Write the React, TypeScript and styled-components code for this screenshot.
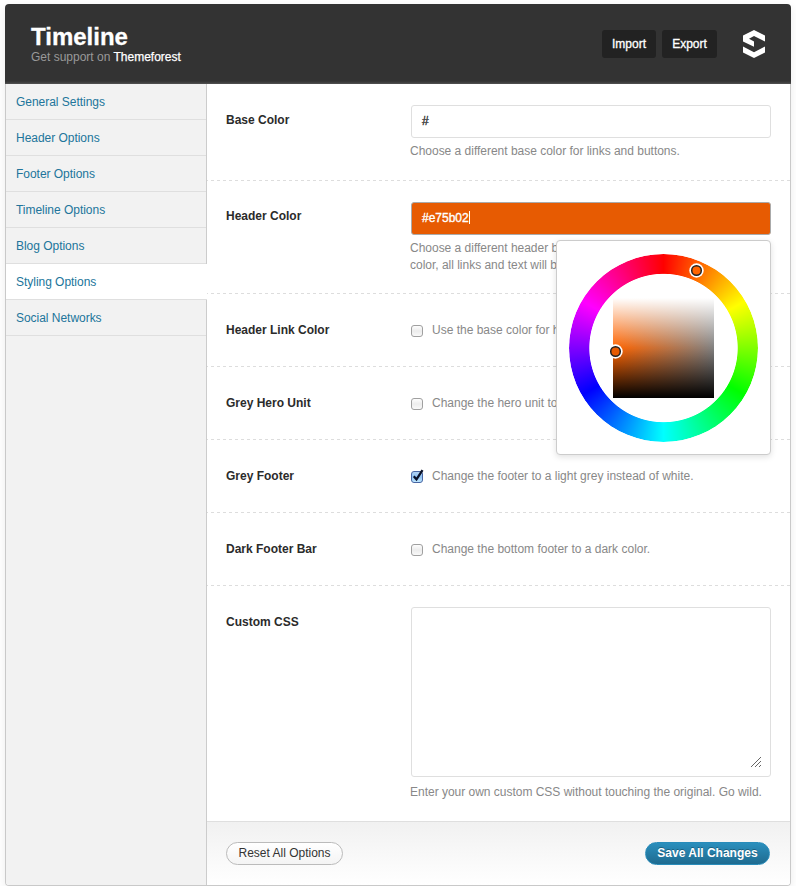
import React from "react";
import styled, { createGlobalStyle, css } from "styled-components";

const Global = createGlobalStyle`
  * { box-sizing: border-box; }
  body { margin: 0; background: #fff; font-family: "Liberation Sans", Arial, sans-serif; font-size: 12px; color: #2b2b2b; }
  h1, p, nav { margin: 0; }
`;

const Frame = styled.div`
  width: 786px;
  height: 882px;
  margin: 4px 0 0 5px;
  display: flex;
  flex-direction: column;
  border-radius: 4px;
  box-shadow: 0 3px 10px rgba(0, 0, 0, 0.08);
`;

const Header = styled.header`
  height: 80px;
  flex: none;
  display: flex;
  align-items: center;
  padding: 0 25px 0 26px;
  background: linear-gradient(#333 0, #333 77px, #444 79px, #555 80px);
  border-radius: 4px 4px 0 0;
`;

const Brand = styled.div`
  flex: 1;
  padding-top: 2px;
`;

const Title = styled.h1`
  font-size: 24px;
  line-height: 25px;
  color: #fff;
  -webkit-text-stroke: 0.3px #fff;
`;

const Support = styled.p`
  font-size: 12px;
  line-height: 17px;
  color: #999;
`;

const SupportLink = styled.a`
  color: #fff;
  -webkit-text-stroke: 0.25px #fff;
`;

const HeaderButton = styled.button<{ $w: number }>`
  width: ${(p) => p.$w}px;
  height: 28px;
  margin-right: 6px;
  padding: 0;
  border: 0;
  border-radius: 3px;
  background: #222;
  color: #fff;
  font: 12px "Liberation Sans", Arial, sans-serif;
  -webkit-text-stroke: 0.3px #fff;
`;

const Logo = styled.svg`
  width: 24px;
  height: 28px;
  margin-left: 19px;
`;

const Body = styled.div`
  flex: 1;
  display: flex;
  border: 1px solid #c9c9c9;
  border-top: 0;
  border-radius: 0 0 4px 4px;
  background: #fff;
`;

const Sidebar = styled.nav`
  width: 201px;
  background: #f2f2f2;
  box-shadow: inset -1px 0 #ccc;
  border-radius: 0 0 0 3px;
`;

const NavItem = styled.a<{ $active?: boolean }>`
  display: block;
  height: 36px;
  padding-left: 10px;
  margin-right: 1px;
  line-height: 36px;
  letter-spacing: -0.03px;
  border-bottom: 1px solid #dfdfdf;
  color: #21759b;
  ${(p) =>
    p.$active &&
    css`
      margin-right: 0;
      background: #fff;
    `}
`;

const Main = styled.main`
  flex: 1;
  display: flex;
  flex-direction: column;
`;

const Row = styled.section<{ $h: number; $last?: boolean }>`
  height: ${(p) => p.$h}px;
  display: flex;
  padding: 21px 19px 0;
  background: ${(p) =>
    p.$last
      ? "none"
      : "repeating-linear-gradient(90deg, #ddd 0 3px, transparent 3px 6px) -2px 100% / calc(100% + 2px) 1px no-repeat"};
`;

const Label = styled.div<{ $raised?: boolean }>`
  width: 184px;
  flex: none;
  padding-top: ${(p) => (p.$raised ? 6 : 7)}px;
  line-height: 16px;
  font-weight: bold;
`;

const Field = styled.div`
  position: relative;
  flex: 1;
`;

const ColorInput = styled.div<{ $filled?: boolean }>`
  height: 33px;
  margin-left: 1px;
  display: flex;
  align-items: center;
  padding: 0 10px 2px;
  border: 1px solid ${(p) => (p.$filled ? "#aaa" : "#dfdfdf")};
  border-radius: 3px;
  background: ${(p) => (p.$filled ? "#e75b02" : "#fff")};
  color: ${(p) => (p.$filled ? "#fff" : "#333")};
  -webkit-text-stroke: 0.35px currentColor;
`;

const Caret = styled.span`
  width: 1px;
  height: 13px;
  background: #fff;
`;

const Help = styled.p<{ $gap?: number }>`
  padding-top: ${(p) => p.$gap ?? 5}px;
  line-height: 17px;
  letter-spacing: -0.015px;
  color: #888;
  white-space: nowrap;
`;

const CheckLine = styled.label`
  display: flex;
  padding-top: 7px;
  color: #888;
  line-height: 16px;
  white-space: nowrap;
`;

const CheckIcon = styled.svg`
  width: 14px;
  height: 15px;
  margin: 1px 8px 0 0;
`;

const TextArea = styled.div`
  height: 170px;
  margin-left: 1px;
  display: flex;
  align-items: flex-end;
  justify-content: flex-end;
  padding: 8px;
  border: 1px solid #dfdfdf;
  border-radius: 3px;
`;

const Picker = styled.div`
  position: absolute;
  z-index: 2;
  top: 38px;
  right: 0;
  width: 215px;
  height: 215px;
  border: 1px solid #ccc;
  border-radius: 4px;
  background: #fff;
  box-shadow: 0 2px 6px rgba(0, 0, 0, 0.12);
`;

const Wheel = styled.div`
  position: absolute;
  left: 12px;
  top: 13px;
  width: 189px;
  height: 188px;
  border-radius: 50%;
  background: conic-gradient(#f00, #ff0, #0f0, #0ff, #00f, #f0f, #f00);
  mask: radial-gradient(circle, transparent 73.8px, #000 74.6px);
`;

const Shade = styled.div`
  position: absolute;
  left: 56px;
  top: 57px;
  width: 101px;
  height: 100px;
  background: linear-gradient(#fff, rgba(255, 255, 255, 0) 50%, rgba(0, 0, 0, 0) 50%, #000),
    linear-gradient(90deg, #ff6400, #808080);
`;

const Marker = styled.svg<{ $x: number; $y: number }>`
  position: absolute;
  left: ${(p) => p.$x}px;
  top: ${(p) => p.$y}px;
  width: 15px;
  height: 15px;
`;

const Footer = styled.footer`
  height: 64px;
  display: flex;
  align-items: center;
  justify-content: space-between;
  padding: 0 20px 1px 19px;
  border-top: 1px solid #dfdfdf;
  border-radius: 0 0 3px 0;
  background: linear-gradient(#f1f1f1, #fff);
`;

const PillButton = styled.button<{ $primary?: boolean }>`
  width: ${(p) => (p.$primary ? 125 : 117)}px;
  height: 23px;
  padding: 0 0 1px;
  border: 1px solid ${(p) => (p.$primary ? "#298cba" : "#bbb")};
  border-radius: 12px;
  font: ${(p) => (p.$primary ? "bold" : "normal")} 12px "Liberation Sans", Arial, sans-serif;
  color: ${(p) => (p.$primary ? "#fff" : "#333")};
  text-shadow: ${(p) => (p.$primary ? "0 -1px 0 rgba(0,0,0,.3)" : "none")};
  background: ${(p) => (p.$primary ? "linear-gradient(#2a8fbd, #1f6b90)" : "linear-gradient(#fff, #f4f4f4)")};
`;

const navItems = [
  "General Settings",
  "Header Options",
  "Footer Options",
  "Timeline Options",
  "Blog Options",
  "Styling Options",
  "Social Networks",
];

const toggles = [
  { label: "Header Link Color", text: "Use the base color for header links.", on: false },
  { label: "Grey Hero Unit", text: "Change the hero unit to a light grey.", on: false },
  { label: "Grey Footer", text: "Change the footer to a light grey instead of white.", on: true },
  { label: "Dark Footer Bar", text: "Change the bottom footer to a dark color.", on: false },
];

function Checkbox({ on }: { on: boolean }) {
  const fill = on ? "boxOn" : "boxOff";
  return (
    <CheckIcon viewBox="0 0 14 15">
      <defs>
        <linearGradient id={fill} x2="0" y2="1">
          <stop offset="0" stopColor={on ? "#b5d5f5" : "#fff"} />
          <stop offset=".5" stopColor={on ? "#8fc2f3" : "#ececec"} />
          <stop offset="1" stopColor={on ? "#c4eaff" : "#fafafa"} />
        </linearGradient>
      </defs>
      <rect x="1.5" y="2.5" width="11" height="11" rx="2.5" fill={`url(#${fill})`} stroke={on ? "#4866a3" : "#a0a0a0"} />
      {on && <path d="M3.8 7.2 6.5 10.400 12.500 1.200" fill="none" stroke="#0a1128" strokeWidth="2.300" />}
    </CheckIcon>
  );
}

function ColorMarker({ x, y, color }: { x: number; y: number; color: string }) {
  return (
    <Marker $x={x} $y={y} viewBox="0 0 15 15">
      <circle cx="7.5" cy="7.5" r="7.2" fill="#fff" />
      <circle cx="7.5" cy="7.5" r="4.8" fill={color} stroke="#222" strokeWidth="1.500" />
    </Marker>
  );
}

export default function App() {
  return (
    <>
      <Global />
      <Frame>
        <Header>
          <Brand>
            <Title>Timeline</Title>
            <Support>
              Get support on <SupportLink>Themeforest</SupportLink>
            </Support>
          </Brand>
          <HeaderButton $w={54}>Import</HeaderButton>
          <HeaderButton $w={55}>Export</HeaderButton>
          <Logo viewBox="0 0 24 28" fill="#fff">
            <path d="M1 5.500 12 0 23 5.500V11.600L12 6 7 8.800 12 11.600V16.800L1 11.600Z" />
            <path d="M1 16.500 12 22.300 23 16.500V22.500L12 28 1 22.500Z" />
          </Logo>
        </Header>
        <Body>
          <Sidebar>
            {navItems.map((n) => (
              <NavItem key={n} $active={n === "Styling Options"}>
                {n}
              </NavItem>
            ))}
          </Sidebar>
          <Main>
            <Row $h={97}>
              <Label>Base Color</Label>
              <Field>
                <ColorInput>#</ColorInput>
                <Help>Choose a different base color for links and buttons.</Help>
              </Field>
            </Row>
            <Row $h={113}>
              <Label $raised>Header Color</Label>
              <Field>
                <ColorInput $filled>
                  #e75b02
                  <Caret />
                </ColorInput>
                <Help>
                  Choose a different header background
                  <br />
                  color, all links and text will be white.
                </Help>
                <Picker>
                  <Wheel />
                  <Shade />
                  <ColorMarker x={132} y={22} color="#ff6400" />
                  <ColorMarker x={51} y={103} color="#e75b02" />
                </Picker>
              </Field>
            </Row>
            {toggles.map((t) => (
              <Row key={t.label} $h={73}>
                <Label>{t.label}</Label>
                <Field>
                  <CheckLine>
                    <Checkbox on={t.on} />
                    {t.text}
                  </CheckLine>
                </Field>
              </Row>
            ))}
            <Row $h={235} $last>
              <Label>Custom CSS</Label>
              <Field>
                <TextArea>
                  <svg width="12" height="12" viewBox="0 0 12 12" stroke="#666" strokeWidth="1">
                    <path d="M1 11 11 1M5 11 11 5M9 11l2-2" />
                  </svg>
                </TextArea>
                <Help $gap={7}>Enter your own custom CSS without touching the original. Go wild.</Help>
              </Field>
            </Row>
            <Footer>
              <PillButton>Reset All Options</PillButton>
              <PillButton $primary>Save All Changes</PillButton>
            </Footer>
          </Main>
        </Body>
      </Frame>
    </>
  );
}
